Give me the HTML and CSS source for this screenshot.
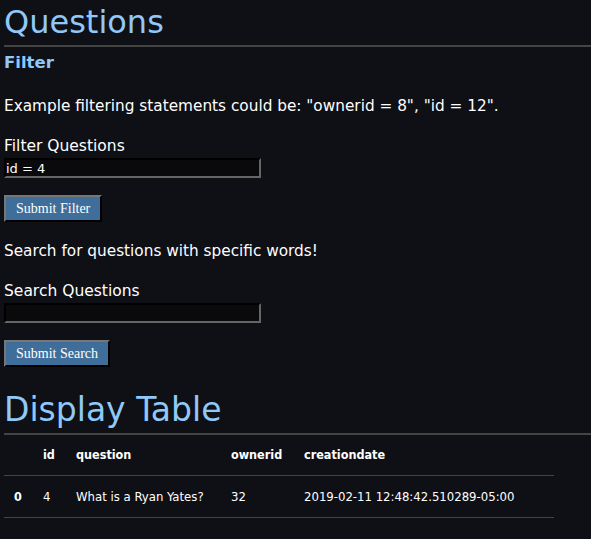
FILE: index.html
```html
<!DOCTYPE html>
<html>
<head>
<meta charset="utf-8">
<link rel="stylesheet" href="styles.css">
</head>
<body>
<h1 class="title">Questions</h1>
<h2 class="sub">Filter</h2>
<p class="text">Example filtering statements could be: "ownerid = 8", "id = 12".</p>
<form class="form">
  <label class="label">Filter Questions</label>
  <input class="field" type="text" value="id = 4">
  <button class="btn" type="button">Submit Filter</button>
</form>
<p class="text text2">Search for questions with specific words!</p>
<form class="form">
  <label class="label">Search Questions</label>
  <input class="field" type="text" value="">
  <button class="btn" type="button">Submit Search</button>
</form>
<h1 class="title title2">Display Table</h1>
<table class="tbl">
  <colgroup>
    <col class="c0"><col class="c1"><col class="c2"><col class="c3"><col class="c4">
  </colgroup>
  <thead>
    <tr><th></th><th>id</th><th>question</th><th>ownerid</th><th>creationdate</th></tr>
  </thead>
  <tbody>
    <tr><th>0</th><td>4</td><td>What is a Ryan Yates?</td><td>32</td><td>2019-02-11 12:48:42.510289-05:00</td></tr>
  </tbody>
</table>
</body>
</html>
```
FILE: styles.css
```css
html, body {
  background: #0f1016;
}
body {
  margin: 0;
  padding: 0 0 0 4px;
  color: #ffffff;
  font-family: "DejaVu Sans", sans-serif;
  font-size: 16px;
}
.title {
  margin: 0;
  padding-top: 2px;
  font-size: 32px;
  font-weight: normal;
  line-height: 40px;
  color: #90c8f8;
  border-bottom: 2px solid #444;
  height: 43px;
}
.title2 {
  margin-top: 21px;
  font-size: 33px;
}
.sub {
  margin: 4px 0 0;
  font-size: 16.5px;
  line-height: 24px;
  color: #90c8f8;
}
.text {
  margin: 20px 0 0;
  line-height: 22px;
  font-size: 15.3px;
}
.text2 {
  margin-top: 18px;
}
.form {
  display: flex;
  flex-direction: column;
  align-items: flex-start;
  margin-top: 19px;
}
.label {
  line-height: 20px;
  font-size: 15.5px;
  margin-bottom: 2px;
}
.field {
  box-sizing: border-box;
  width: 257px;
  height: 20px;
  margin: 0;
  padding: 0;
  background: #0a0a0d;
  color: #fff;
  font-family: "DejaVu Sans", sans-serif;
  font-size: 13px;
  border: 2px inset #666;
  border-color: #000 #666 #666 #000;
}
.btn {
  margin-top: 17px;
  height: 27px;
  padding: 0 10px;
  background: #3e6e99;
  color: #fff;
  font-family: "Liberation Serif", serif;
  font-size: 14px;
  border: 2px solid;
  border-color: #777 #000 #000 #777;
}
.tbl {
  margin-top: -1px;
  border-collapse: collapse;
  table-layout: fixed;
  width: 550px;
  font-family: "DejaVu Sans Condensed", "DejaVu Sans", sans-serif;
  font-size: 12.5px;
  white-space: nowrap;
}
.c0 { width: 29px; }
.c1 { width: 33px; }
.c2 { width: 155px; }
.c3 { width: 73px; }
.c4 { width: 260px; }
.tbl th, .tbl td {
  text-align: left;
  padding: 0 10px;
  height: 41px;
  border-bottom: 1px solid #444;
  overflow: hidden;
}
.tbl thead th {
  font-weight: bold;
}
.tbl tbody td {
  font-size: 13px;
}
```
